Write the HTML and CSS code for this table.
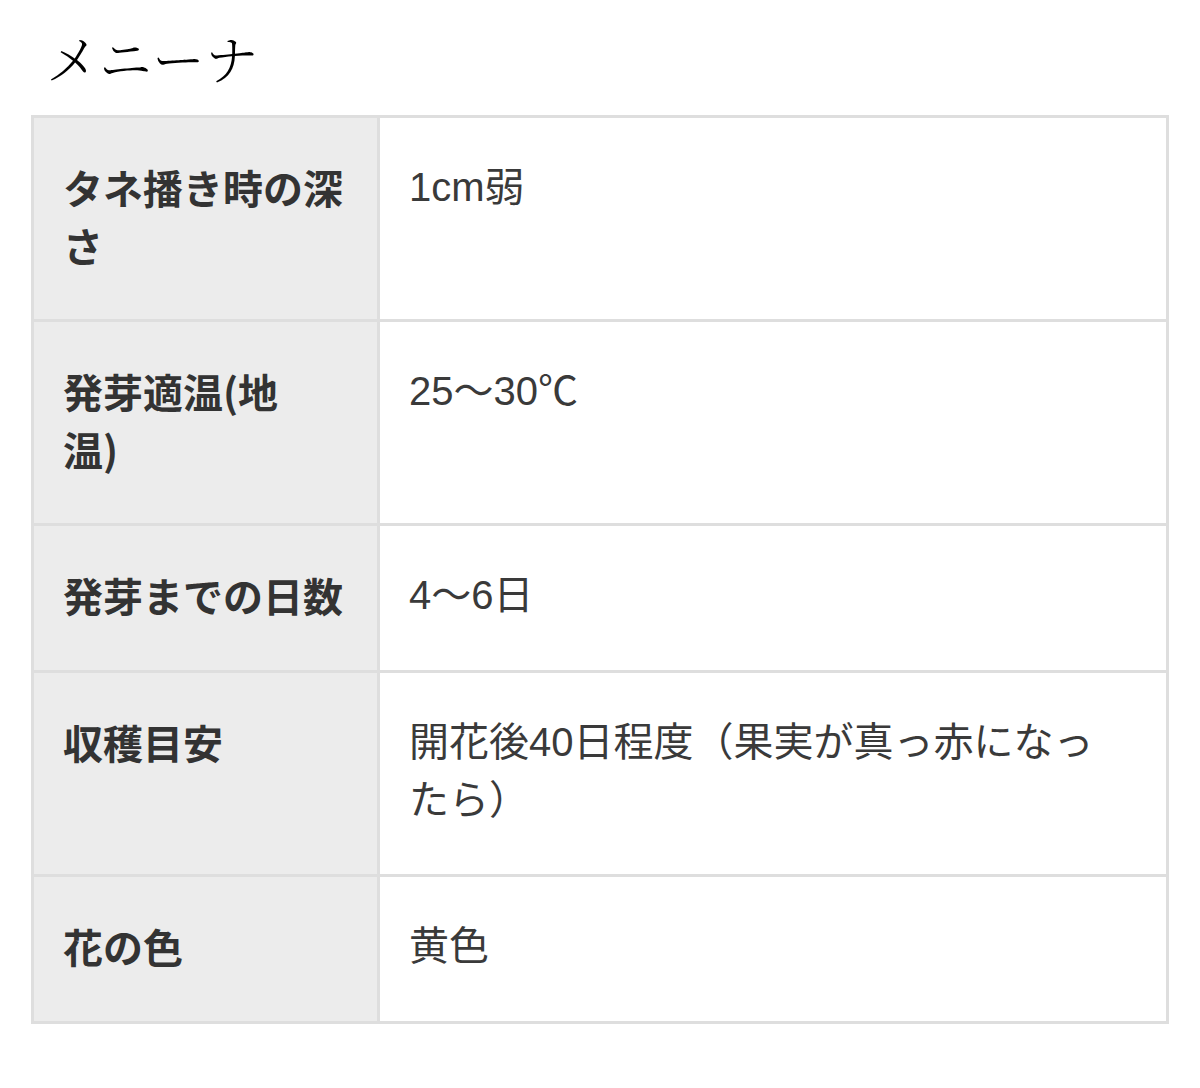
FILE: index.html
```html
<!DOCTYPE html>
<html lang="ja">
<head>
<meta charset="utf-8">
<link rel="stylesheet" href="styles.css">
</head>
<body>
<h2 class="title">メニーナ</h2>
<table class="spec">
  <colgroup><col class="c1"><col class="c2"></colgroup>
  <tbody>
    <tr class="r2"><th>タネ播き時の深さ</th><td>1cm弱</td></tr>
    <tr class="r2"><th>発芽適温(地<br>温)</th><td>25〜30℃</td></tr>
    <tr class="r1"><th>発芽までの日数</th><td>4〜6日</td></tr>
    <tr class="r2"><th>収穫目安</th><td>開花後40日程度（果実が真っ赤になったら）</td></tr>
    <tr class="r1"><th>花の色</th><td>黄色</td></tr>
  </tbody>
</table>
</body>
</html>
```

FILE: styles.css
```css
html, body {
  margin: 0;
  padding: 0;
  background: #fff;
}
body {
  font-family: "Noto Sans CJK JP", "Noto Sans", sans-serif;
  color: #333;
}
.title {
  margin: 0;
  padding: 22px 0 0 46px;
  height: 115px;
  box-sizing: border-box;
  font-family: "Noto Serif CJK JP", "IPAMincho", "Noto Sans CJK JP", serif;
  font-weight: 300;
  font-size: 53px;
  line-height: 70px;
  color: #000;
}
.spec {
  margin-left: 31px;
  width: 1138px;
  border-collapse: collapse;
  border: 3px solid #dedede;
  table-layout: fixed;
}
.c1 { width: 346px; }
.spec th, .spec td {
  border: 3px solid #dedede;
  font-size: 40px;
  line-height: 58px;
  vertical-align: top;
  text-align: left;
  padding: 40px 30px 0 29px;
  box-sizing: border-box;
}
.spec th {
  background: #ececec;
  font-weight: 700;
  color: #333;
}
.spec td {
  background: #fff;
  font-family: "Liberation Sans", "Noto Sans CJK JP", sans-serif;
  font-weight: 400;
  color: #3a3a3a;
  padding-right: 40px;
}
.r2 th, .r2 td { height: 204px; }
.r1 th, .r1 td { height: 147px; }
```
